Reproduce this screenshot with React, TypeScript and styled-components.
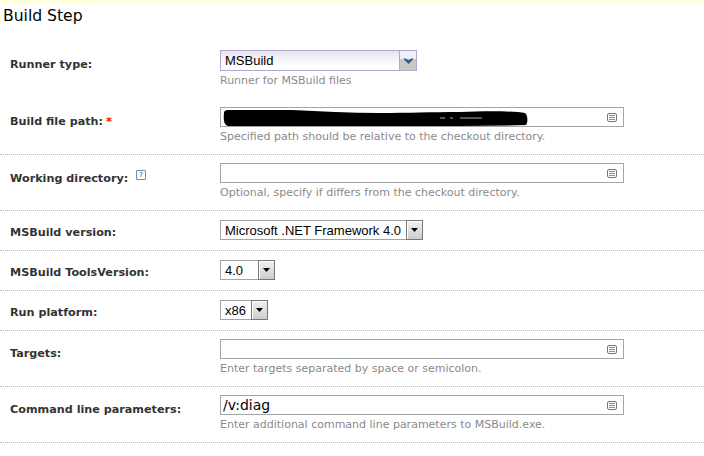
import React from "react";
import styled, { createGlobalStyle } from "styled-components";

const GlobalStyle = createGlobalStyle`
  html, body {
    margin: 0;
    padding: 0;
    background: #fff;
    overflow: hidden;
  }
`;

const Page = styled.div`
  width: 704px;
  height: 456px;
  overflow: hidden;
  background: #fff;
  border-top: 3px solid #ffffd9;
  box-sizing: border-box;
  font-family: "DejaVu Sans", Verdana, sans-serif;
`;

const Title = styled.h1`
  margin: 0;
  height: 39px;
  padding: 3px 0 0 3px;
  box-sizing: border-box;
  font-family: "DejaVu Sans", Verdana, sans-serif;
  font-size: 15.6px;
  font-weight: normal;
  line-height: 20px;
  color: #000;
`;

const Row = styled.div<{ $plain?: boolean; $short?: boolean }>`
  display: grid;
  grid-template-columns: 220px 1fr;
  padding: ${(p) => (p.$short ? "9px 0 10px" : "8px 0")};
  border-bottom: 1px dotted ${(p) => (p.$plain ? "transparent" : "#c4b0c4")};
`;

const Label = styled.div<{ $short?: boolean }>`
  padding: ${(p) => (p.$short ? "6px" : "7px")} 0 0 10px;
  font-size: 11.2px;
  line-height: ${(p) => (p.$short ? "14px" : "15px")};
  font-weight: bold;
  color: #333;
  white-space: nowrap;
`;

const Required = styled.span`
  color: #f00;
  margin-left: 3px;
`;

const HelpIcon = styled.span`
  display: inline-block;
  width: 8px;
  height: 8px;
  margin-left: 8px;
  border: 1px solid #5b8fc9;
  border-radius: 1px;
  vertical-align: 5px;
  font-size: 7px;
  line-height: 8px;
  font-weight: normal;
  text-align: center;
  color: #444;
`;

const Field = styled.div`
  min-width: 0;
`;

const Hint = styled.div`
  height: 19px;
  font-size: 11px;
  line-height: 20px;
  color: #8a8a8a;
  white-space: nowrap;
`;

const InputWrap = styled.div`
  position: relative;
  width: 404px;
  height: 20px;
`;

const TextInput = styled.input`
  display: block;
  width: 100%;
  height: 100%;
  box-sizing: border-box;
  padding: 0 24px 0 2px;
  border: 1px solid #9ea6a6;
  outline: none;
  background: #fff;
  font-family: "DejaVu Sans", Tahoma, sans-serif;
  font-size: 14px;
  color: #000;
`;

const NoteIcon = styled.svg`
  position: absolute;
  top: 6px;
  right: 7px;
  width: 10px;
  height: 9px;
`;

const Redaction = styled.svg`
  position: absolute;
  top: 0;
  left: 0;
  width: 404px;
  height: 20px;
`;

const Combo = styled.div<{ $width: number; $fancy?: boolean }>`
  display: flex;
  width: ${(p) => p.$width}px;
  height: ${(p) => (p.$fancy ? 21 : 20)}px;
  box-sizing: border-box;
  border: 1px solid ${(p) => (p.$fancy ? "#a9a9d4" : "#9ea6a6")};
  background: ${(p) =>
    p.$fancy ? "linear-gradient(#e9e4ea, #ffffff 75%)" : "#fff"};
`;

const ComboText = styled.div`
  flex: 1;
  padding-left: 4px;
  font-family: "Liberation Sans", Arial, sans-serif;
  font-size: 13px;
  line-height: 20px;
  color: #000;
  white-space: nowrap;
  overflow: hidden;
`;

const ComboButton = styled.div<{ $fancy?: boolean }>`
  display: flex;
  align-items: center;
  justify-content: center;
  flex: none;
  width: 17px;
  box-sizing: border-box;
  margin: ${(p) => (p.$fancy ? "0" : "-1px -1px -1px 0")};
  border: ${(p) => (p.$fancy ? "0" : "1px solid #777")};
  border-left: 1px solid ${(p) => (p.$fancy ? "#a9a9d4" : "#777")};
  box-shadow: ${(p) => (p.$fancy ? "none" : "inset 1px 1px 0 #fff")};
  background: ${(p) =>
    p.$fancy
      ? "linear-gradient(#efeef2 0, #efeef2 42%, #c9c9c2 42%)"
      : "linear-gradient(#f0f0f0, #cdcdcd)"};
`;

const Arrow = styled.svg`
  width: 9px;
  height: 6px;
`;

type TextFieldProps = {
  value?: string;
  hint: string;
  redacted?: boolean;
};

const TextField: React.FC<TextFieldProps> = ({ value = "", hint, redacted }) => (
  <Field>
    <InputWrap>
      <TextInput value={value} readOnly />
      {redacted && (
        <Redaction viewBox="0 0 404 20">
          <path
            d="M4 6C4 3.5 6 3 10 3L72 3C100 4 130 6 160 6C190 6 210 5 240 5C265 4 295 4 305 6C308 8 308 16 306 18C270 19 230 19 190 19L10 19C5 19 3 16 4 6Z"
            fill="#000"
          />
          <path d="M220 11h5M230 11h3M240 11h22" stroke="#aaa" strokeWidth="1" />
        </Redaction>
      )}
      <NoteIcon viewBox="0 0 10 9">
        <rect x="0.5" y="0.5" width="9" height="8" rx="1.5" fill="#fff" stroke="#777" />
        <path d="M2 2.5h6M2 4.5h6M2 6.5h6" stroke="#8a8aa8" />
      </NoteIcon>
    </InputWrap>
    <Hint>{hint}</Hint>
  </Field>
);

type ComboFieldProps = {
  value: string;
  width: number;
  fancy?: boolean;
};

const ComboField: React.FC<ComboFieldProps> = ({ value, width, fancy }) => (
  <Combo $width={width} $fancy={fancy}>
    <ComboText>{value}</ComboText>
    <ComboButton $fancy={fancy}>
      {fancy ? (
        <Arrow viewBox="0 0 9 6">
          <path d="M0 0L4.5 2 9 0V1.5L4.5 6 0 1.5Z" fill="#2f5a9e" />
        </Arrow>
      ) : (
        <Arrow viewBox="0 0 9 6">
          <path d="M1 1h7L4.5 5z" fill="#000" />
        </Arrow>
      )}
    </ComboButton>
  </Combo>
);

const App: React.FC = () => (
  <Page>
    <GlobalStyle />
    <Title>Build Step</Title>

    <Row $plain>
      <Label>Runner type:</Label>
      <Field>
        <ComboField value="MSBuild" width={197} fancy />
        <Hint>Runner for MSBuild files</Hint>
      </Field>
    </Row>

    <Row>
      <Label>
        Build file path:<Required>*</Required>
      </Label>
      <TextField
        redacted
        hint="Specified path should be relative to the checkout directory."
      />
    </Row>

    <Row>
      <Label>
        Working directory:<HelpIcon>?</HelpIcon>
      </Label>
      <TextField hint="Optional, specify if differs from the checkout directory." />
    </Row>

    <Row $short>
      <Label $short>MSBuild version:</Label>
      <ComboField value="Microsoft .NET Framework 4.0" width={203} />
    </Row>

    <Row $short>
      <Label $short>MSBuild ToolsVersion:</Label>
      <ComboField value="4.0" width={55} />
    </Row>

    <Row $short>
      <Label $short>Run platform:</Label>
      <ComboField value="x86" width={48} />
    </Row>

    <Row>
      <Label>Targets:</Label>
      <TextField hint="Enter targets separated by space or semicolon." />
    </Row>

    <Row>
      <Label>Command line parameters:</Label>
      <TextField
        value="/v:diag"
        hint="Enter additional command line parameters to MSBuild.exe."
      />
    </Row>
  </Page>
);

export default App;
